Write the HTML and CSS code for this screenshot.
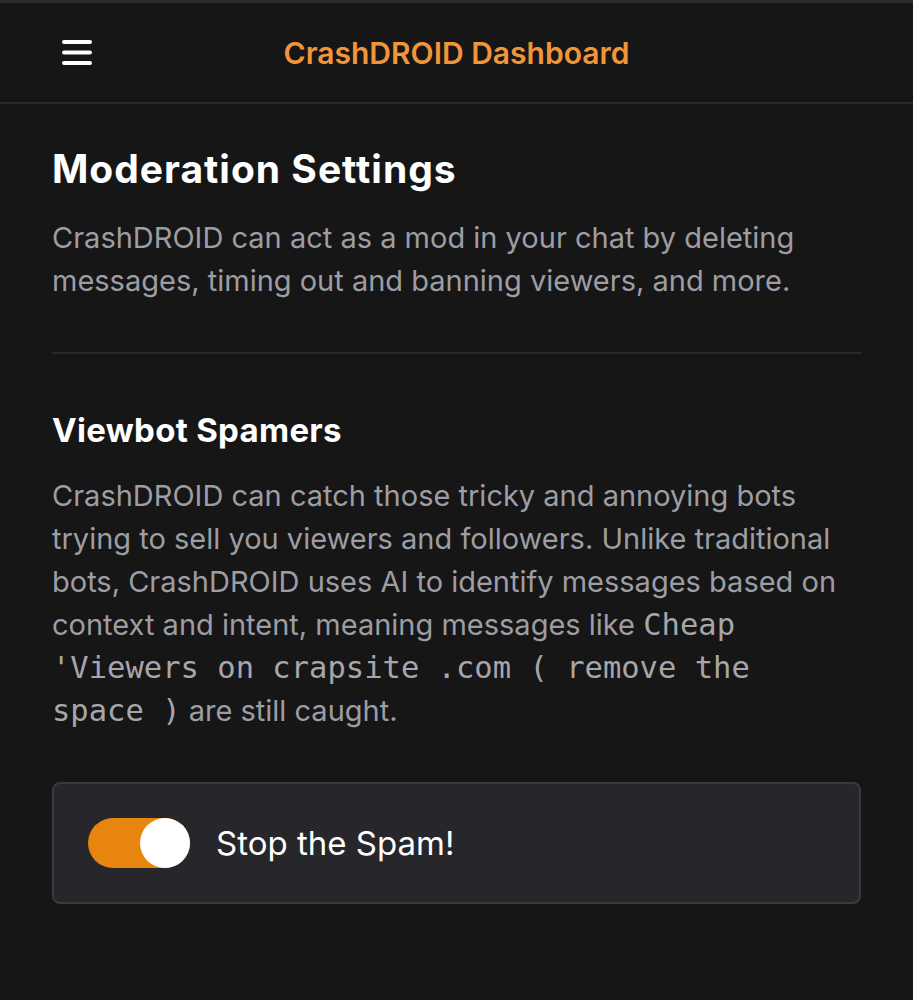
FILE: index.html
```html
<!DOCTYPE html>
<html lang="en">
<head>
<meta charset="utf-8">
<title>CrashDROID Dashboard</title>
<link rel="stylesheet" href="styles.css">
</head>
<body>
<header class="topbar">
  <button class="menu-btn" aria-label="Menu">
    <svg width="32" height="28" viewBox="0 0 32 28">
      <rect x="1" y="2" width="30" height="4" rx="2" fill="#fff"/>
      <rect x="1" y="12.5" width="30" height="4" rx="2" fill="#fff"/>
      <rect x="1" y="23" width="30" height="4" rx="2" fill="#fff"/>
    </svg>
  </button>
  <h1 class="brand">CrashDROID Dashboard</h1>
</header>
<main class="content">
  <h2 class="title">Moderation Settings</h2>
  <p class="lead">CrashDROID can act as a mod in your chat by deleting messages, timing out and banning viewers, and more.</p>
  <hr class="divider">
  <h3 class="subtitle">Viewbot Spamers</h3>
  <p class="lead lead-tight">CrashDROID can catch those tricky and annoying bots trying to sell you viewers and followers. Unlike traditional bots, CrashDROID uses AI to identify messages based on context and intent, meaning messages like <code class="code">Cheap 'Viewers on crapsite .com ( remove the space )</code> are still caught.</p>
  <div class="card">
    <span class="toggle"><span class="knob"></span></span>
    <span class="card-label">Stop the Spam!</span>
  </div>
</main>
</body>
</html>
```

FILE: styles.css
```css
* { box-sizing: border-box; }
html, body {
  margin: 0;
  background: #161617;
  font-family: Inter, "Noto Sans", sans-serif;
  color: #fff;
}
.topbar {
  position: relative;
  height: 104px;
  border-top: 3px solid #2b2c2e;
  border-bottom: 2px solid #2a2a2c;
  display: flex;
  align-items: center;
  justify-content: center;
  background: #161616;
}
.menu-btn {
  position: absolute;
  left: 61px;
  top: 35px;
  background: none;
  border: 0;
  padding: 0;
  display: flex;
}
.brand {
  margin: 0;
  font-size: 30px;
  font-weight: 600;
  color: #f0953a;
  letter-spacing: 0;
}
.content {
  padding: 39px 52px 40px;
}
.title {
  margin: 0;
  font-size: 39px;
  font-weight: 700;
  line-height: 52px;
  letter-spacing: 1px;
}
.lead {
  margin: 21px 0 0;
  max-width: 795px;
  font-size: 29px;
  line-height: 43px;
  color: #9d9da3;
}
.lead-tight {
  margin-top: 23px;
}
.divider {
  border: 0;
  height: 2px;
  background: #29292b;
  margin: 50px 0 0;
}
.subtitle {
  margin: 55px 0 0;
  font-size: 33px;
  font-weight: 700;
  line-height: 42px;
  letter-spacing: 0.3px;
}
.code {
  font-family: "DejaVu Sans Mono", "Liberation Mono", monospace;
  font-size: 30.5px;
  line-height: 1;
  color: #a6a6ab;
}
.card {
  margin-top: 50px;
  height: 122px;
  border: 2px solid #3a3a3e;
  border-radius: 8px;
  background: #26262b;
  display: flex;
  align-items: center;
  padding: 0 34px;
  gap: 26px;
}
.toggle {
  width: 102px;
  height: 50px;
  border-radius: 25px;
  background: #e8850f;
  display: flex;
  justify-content: flex-end;
  align-items: center;
  flex: none;
}
.knob {
  width: 50px;
  height: 50px;
  border-radius: 50%;
  background: #fff;
}
.card-label {
  font-size: 33px;
  color: #fff;
}
```
